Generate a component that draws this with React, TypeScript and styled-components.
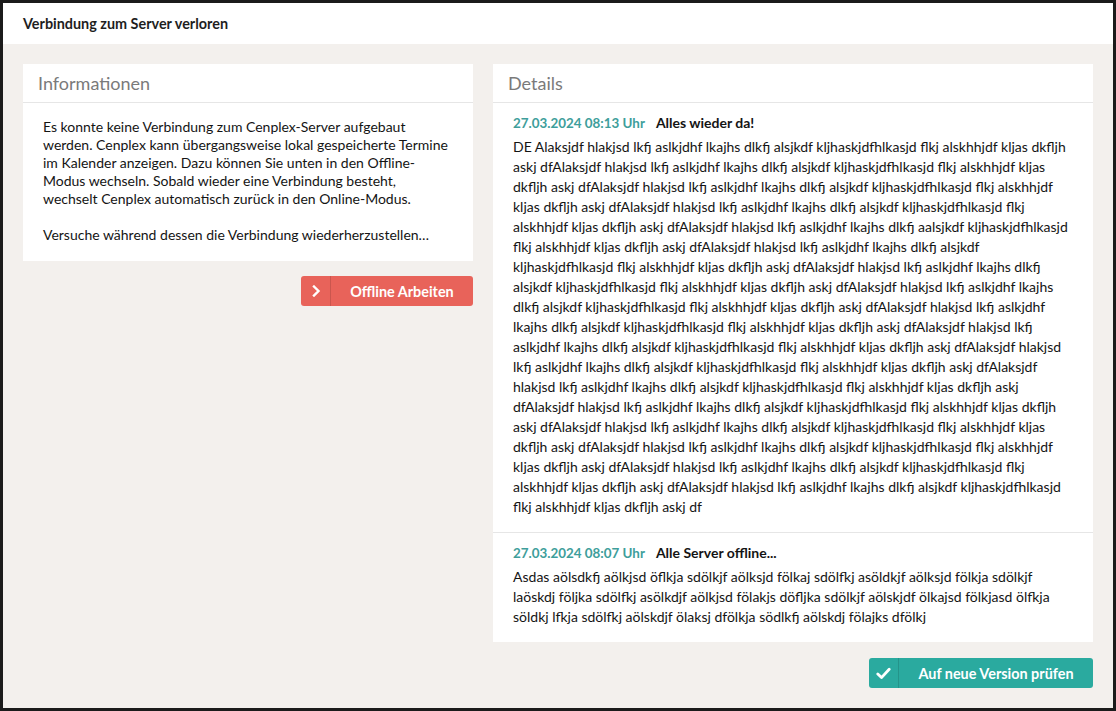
import React from "react";
import styled, { createGlobalStyle } from "styled-components";

const GlobalStyle = createGlobalStyle`
  html, body {
    margin: 0;
    padding: 0;
    height: 100%;
    background: #1b1b1b;
  }
  body {
    font-family: "Lato", "Liberation Sans", sans-serif;
    color: #1a1a1a;
  }
  #root {
    height: 100%;
  }
`;

const Frame = styled.div`
  box-sizing: border-box;
  width: 100vw;
  height: 100vh;
  border: 3px solid #1b1b1b;
  display: flex;
  flex-direction: column;
  background: #f3f0ed;
`;

const TitleBar = styled.div`
  height: 41px;
  flex-shrink: 0;
  background: #ffffff;
  padding: 0 20px;
  display: flex;
  align-items: center;
  font-size: 14.4px;
  font-weight: 700;
  color: #1e1e1e;
`;

const Content = styled.div`
  flex: 1;
  padding: 20px;
  display: grid;
  grid-template-columns: 450px 600px;
  gap: 20px;
  align-items: start;
`;

const Column = styled.div<{ $gap: number }>`
  display: flex;
  flex-direction: column;
  align-items: flex-end;
  gap: ${(p) => p.$gap}px;
`;

const Panel = styled.section`
  width: 100%;
  background: #ffffff;
`;

const PanelHeader = styled.div`
  box-sizing: border-box;
  height: 39px;
  padding: 0 15px;
  display: flex;
  align-items: center;
  border-bottom: 1px solid #e6e6e6;
  font-size: 18px;
  color: #7a7a7a;
`;

const InfoBody = styled.div`
  padding: 15px 20px 17px;
  font-size: 14px;
  line-height: 18px;
  color: #141414;
`;

const Entry = styled.div`
  padding: 10px 20px 15px;

  & + & {
    border-top: 1px solid #e6e6e6;
  }
`;

const EntryHead = styled.div`
  display: flex;
  align-items: baseline;
  gap: 11px;
  line-height: 20px;
  font-size: 14px;
  margin-bottom: 4px;
`;

const Stamp = styled.span`
  color: #3e9e9b;
  font-size: 13.4px;
  font-weight: 700;
`;

const EntryTitle = styled.span`
  font-weight: 700;
  color: #141414;
`;

const EntryText = styled.div`
  font-size: 14px;
  line-height: 20px;
  white-space: nowrap;
  color: #141414;
`;

const ActionButton = styled.button<{ $color: string; $width: number }>`
  display: flex;
  align-items: stretch;
  width: ${(p) => p.$width}px;
  height: 30px;
  padding: 0;
  border: none;
  border-radius: 3px;
  background: ${(p) => p.$color};
  color: #ffffff;
  font-family: inherit;
  font-size: 14.4px;
  font-weight: 700;
  cursor: pointer;
`;

const IconCell = styled.span`
  width: 29px;
  display: flex;
  align-items: center;
  justify-content: center;
  border-right: 1px solid rgba(0, 0, 0, 0.13);
`;

const Label = styled.span`
  flex: 1;
  display: flex;
  align-items: center;
  justify-content: center;
`;

const infoLines = [
  "Es konnte keine Verbindung zum Cenplex-Server aufgebaut",
  "werden. Cenplex kann übergangsweise lokal gespeicherte Termine",
  "im Kalender anzeigen. Dazu können Sie unten in den Offline-",
  "Modus wechseln. Sobald wieder eine Verbindung besteht,",
  "wechselt Cenplex automatisch zurück in den Online-Modus.",
  "",
  "Versuche während dessen die Verbindung wiederherzustellen…",
];

const entries = [
  {
    stamp: "27.03.2024 08:13 Uhr",
    title: "Alles wieder da!",
    lines: [
      "DE Alaksjdf hlakjsd lkfj aslkjdhf lkajhs dlkfj alsjkdf kljhaskjdfhlkasjd flkj alskhhjdf kljas dkfljh",
      "askj dfAlaksjdf hlakjsd lkfj aslkjdhf lkajhs dlkfj alsjkdf kljhaskjdfhlkasjd flkj alskhhjdf kljas",
      "dkfljh askj dfAlaksjdf hlakjsd lkfj aslkjdhf lkajhs dlkfj alsjkdf kljhaskjdfhlkasjd flkj alskhhjdf",
      "kljas dkfljh askj dfAlaksjdf hlakjsd lkfj aslkjdhf lkajhs dlkfj alsjkdf kljhaskjdfhlkasjd flkj",
      "alskhhjdf kljas dkfljh askj dfAlaksjdf hlakjsd lkfj aslkjdhf lkajhs dlkfj aalsjkdf kljhaskjdfhlkasjd",
      "flkj alskhhjdf kljas dkfljh askj dfAlaksjdf hlakjsd lkfj aslkjdhf lkajhs dlkfj alsjkdf",
      "kljhaskjdfhlkasjd flkj alskhhjdf kljas dkfljh askj dfAlaksjdf hlakjsd lkfj aslkjdhf lkajhs dlkfj",
      "alsjkdf kljhaskjdfhlkasjd flkj alskhhjdf kljas dkfljh askj dfAlaksjdf hlakjsd lkfj aslkjdhf lkajhs",
      "dlkfj alsjkdf kljhaskjdfhlkasjd flkj alskhhjdf kljas dkfljh askj dfAlaksjdf hlakjsd lkfj aslkjdhf",
      "lkajhs dlkfj alsjkdf kljhaskjdfhlkasjd flkj alskhhjdf kljas dkfljh askj dfAlaksjdf hlakjsd lkfj",
      "aslkjdhf lkajhs dlkfj alsjkdf kljhaskjdfhlkasjd flkj alskhhjdf kljas dkfljh askj dfAlaksjdf hlakjsd",
      "lkfj aslkjdhf lkajhs dlkfj alsjkdf kljhaskjdfhlkasjd flkj alskhhjdf kljas dkfljh askj dfAlaksjdf",
      "hlakjsd lkfj aslkjdhf lkajhs dlkfj alsjkdf kljhaskjdfhlkasjd flkj alskhhjdf kljas dkfljh askj",
      "dfAlaksjdf hlakjsd lkfj aslkjdhf lkajhs dlkfj alsjkdf kljhaskjdfhlkasjd flkj alskhhjdf kljas dkfljh",
      "askj dfAlaksjdf hlakjsd lkfj aslkjdhf lkajhs dlkfj alsjkdf kljhaskjdfhlkasjd flkj alskhhjdf kljas",
      "dkfljh askj dfAlaksjdf hlakjsd lkfj aslkjdhf lkajhs dlkfj alsjkdf kljhaskjdfhlkasjd flkj alskhhjdf",
      "kljas dkfljh askj dfAlaksjdf hlakjsd lkfj aslkjdhf lkajhs dlkfj alsjkdf kljhaskjdfhlkasjd flkj",
      "alskhhjdf kljas dkfljh askj dfAlaksjdf hlakjsd lkfj aslkjdhf lkajhs dlkfj alsjkdf kljhaskjdfhlkasjd",
      "flkj alskhhjdf kljas dkfljh askj df",
    ],
  },
  {
    stamp: "27.03.2024 08:07 Uhr",
    title: "Alle Server offline...",
    lines: [
      "Asdas aölsdkfj aölkjsd öflkja sdölkjf aölksjd fölkaj sdölfkj asöldkjf aölksjd fölkja sdölkjf",
      "laöskdj följka sdölfkj asölkdjf aölkjsd fölakjs döfljka sdölkjf aölskjdf ölkajsd fölkjasd ölfkja",
      "söldkj lfkja sdölfkj aölskdjf ölaksj dfölkja södlkfj aölskdj fölajks dfölkj",
    ],
  },
];

const withBreaks = (lines: string[]) =>
  lines.map((line, i) => (
    <React.Fragment key={i}>
      {line}
      {i < lines.length - 1 && <br />}
    </React.Fragment>
  ));

const ChevronIcon = () => (
  <svg width="10" height="12" viewBox="0 0 10 12" fill="none">
    <polyline
      points="3,1.5 7.5,6 3,10.5"
      stroke="#ffffff"
      strokeWidth="2.4"
      strokeLinecap="square"
      strokeLinejoin="miter"
    />
  </svg>
);

const CheckIcon = () => (
  <svg width="15" height="13" viewBox="0 0 15 13" fill="none">
    <polyline
      points="1.8,7 5.5,10.6 13.2,2.2"
      stroke="#ffffff"
      strokeWidth="2.8"
      strokeLinecap="round"
      strokeLinejoin="round"
    />
  </svg>
);

const App = () => {
  return (
    <>
      <GlobalStyle />
      <Frame>
        <TitleBar>Verbindung zum Server verloren</TitleBar>
        <Content>
          <Column $gap={15}>
            <Panel>
              <PanelHeader>Informationen</PanelHeader>
              <InfoBody>{withBreaks(infoLines)}</InfoBody>
            </Panel>
            <ActionButton $color="#e8635a" $width={172}>
              <IconCell>
                <ChevronIcon />
              </IconCell>
              <Label>Offline Arbeiten</Label>
            </ActionButton>
          </Column>

          <Column $gap={16}>
            <Panel>
              <PanelHeader>Details</PanelHeader>
              {entries.map((entry) => (
                <Entry key={entry.stamp}>
                  <EntryHead>
                    <Stamp>{entry.stamp}</Stamp>
                    <EntryTitle>{entry.title}</EntryTitle>
                  </EntryHead>
                  <EntryText>{withBreaks(entry.lines)}</EntryText>
                </Entry>
              ))}
            </Panel>
            <ActionButton $color="#2aaa9f" $width={224}>
              <IconCell>
                <CheckIcon />
              </IconCell>
              <Label>Auf neue Version prüfen</Label>
            </ActionButton>
          </Column>
        </Content>
      </Frame>
    </>
  );
};

export default App;
